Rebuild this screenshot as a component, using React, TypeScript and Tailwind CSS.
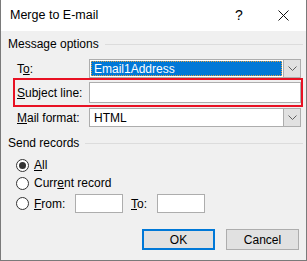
import React from 'react';

const font = { fontFamily: '"Liberation Sans", Arial, sans-serif' };

const Chevron = () => (
  <svg width="9" height="5" viewBox="0 0 9 5" className="text-[#606060]">
    <path d="M0.5 0.5 L4.5 4.5 L8.5 0.5" fill="none" stroke="currentColor" strokeWidth="1" />
  </svg>
);

const GroupHeader = ({ title }: { title: string }) => (
  <div className="flex items-center h-4 pl-[7px] pr-[3px] gap-[6px]">
    <span className="leading-4">{title}</span>
    <div className="flex-1 h-px bg-[#dcdcdc]" />
  </div>
);

const Radio = ({ checked }: { checked?: boolean }) => (
  <span className="w-[13px] h-[13px] rounded-full border border-[#333] bg-white flex items-center justify-center shrink-0">
    {checked && <span className="w-[7px] h-[7px] rounded-full bg-[#333]" />}
  </span>
);

export default function App() {
  return (
    <div
      className="relative w-[307px] h-[261px] bg-[#f0f0f0] border-x border-b border-[#7a7a7a] text-[12px] text-black flex flex-col"
      style={font}
    >
      {/* title bar */}
      <div className="h-[31px] bg-white flex items-center pl-[9px] shrink-0">
        <span className="text-[12.5px] flex-1">Merge to E-mail</span>
        <span className="w-[20px] text-center text-[14px] mr-[29px]">?</span>
        <svg width="11" height="11" viewBox="0 0 11 11" className="mr-[17px]">
          <path d="M0.5 0.5 L10.5 10.5 M10.5 0.5 L0.5 10.5" stroke="#111" strokeWidth="1" />
        </svg>
      </div>

      <div className="mt-[5px]">
        <GroupHeader title="Message options" />
      </div>

      {/* To */}
      <div className="flex items-center mt-[7px] pl-[16px]">
        <span className="w-[72px]">T<u>o</u>:</span>
        <div className="w-[212px] h-[19px] bg-white border border-[#adadad] flex">
          <div className="flex-1 m-px bg-[#0078d7] border border-dotted border-[#e0a040] text-white flex items-center pl-[2px] leading-none">
            Email1Address
          </div>
          <div className="w-[17px] bg-[#e1e1e1] border-l border-[#adadad] flex items-center justify-center">
            <Chevron />
          </div>
        </div>
      </div>

      {/* Subject */}
      <div className="flex items-center mt-[4px] pl-[16px]">
        <span className="w-[72px]"><u>S</u>ubject line:</span>
        <div className="w-[212px] h-[21px] bg-white border border-[#adadad]" />
      </div>

      {/* Mail format */}
      <div className="flex items-center mt-[5px] pl-[16px]">
        <span className="w-[72px]"><u>M</u>ail format:</span>
        <div className="w-[212px] h-[19px] bg-white border border-[#adadad] flex">
          <div className="flex-1 flex items-center pl-[4px] leading-none">HTML</div>
          <div className="w-[17px] bg-[#e1e1e1] border-l border-[#adadad] flex items-center justify-center">
            <Chevron />
          </div>
        </div>
      </div>

      <div className="mt-[8px]">
        <GroupHeader title="Send records" />
      </div>

      <div className="flex flex-col pl-[15px] mt-[5px]">
        <div className="flex items-center gap-[5px] h-[18px]">
          <Radio checked />
          <span><u>A</u>ll</span>
        </div>
        <div className="flex items-center gap-[5px] h-[18px]">
          <Radio />
          <span>Curr<u>e</u>nt record</span>
        </div>
        <div className="flex items-center h-[19px] mt-[2px]">
          <Radio />
          <span className="ml-[5px] w-[41px]"><u>F</u>rom:</span>
          <div className="w-[48px] h-[19px] bg-white border border-[#adadad]" />
          <span className="ml-[8px] w-[26px]"><u>T</u>o:</span>
          <div className="w-[48px] h-[19px] bg-white border border-[#adadad]" />
        </div>
      </div>

      <div className="flex justify-end gap-[11px] pr-[7px] mt-[16px]">
        <button className="w-[73px] h-[21px] bg-[#e1e1e1] border-2 border-[#0078d7] leading-none">OK</button>
        <button className="w-[73px] h-[21px] bg-[#e1e1e1] border border-[#adadad] leading-none">Cancel</button>
      </div>

      {/* annotation highlight */}
      <div className="absolute left-[12px] top-[78px] w-[290px] h-[29px] border-2 border-[#e81123] pointer-events-none" />
    </div>
  );
}
